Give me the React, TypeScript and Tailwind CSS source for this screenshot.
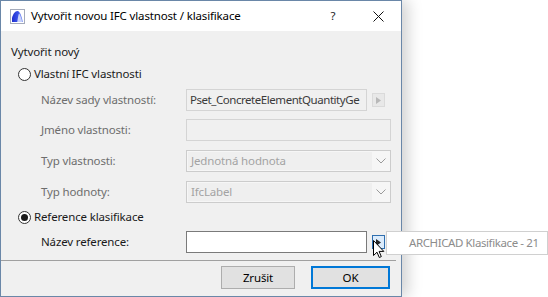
import React from 'react';

const font = { fontFamily: '"Noto Sans", "Liberation Sans", sans-serif' };

function AppIcon() {
  return (
    <svg width="15" height="15" viewBox="0 0 15 15">
      <defs>
        <linearGradient id="ac" x1="0" y1="0" x2="1" y2="0">
          <stop offset="0" stopColor="#1f2fd0" />
          <stop offset="0.6" stopColor="#3d57ea" />
          <stop offset="1" stopColor="#8ea3f7" />
        </linearGradient>
      </defs>
      <rect x="0.5" y="0.5" width="14" height="14" fill="#ffffff" stroke="#a4abbb" />
      <path d="M2 13 L2 9 C3 5 5 2 7.5 2 C10 2 11.5 7 13 13 Z" fill="url(#ac)" />
      <path d="M7.2 13 C8 8 8.5 5 9.2 4.2 C10.5 6.5 11.5 9.5 12.2 13 Z" fill="#c9d3fb" />
    </svg>
  );
}

function Radio({ checked }: { checked?: boolean }) {
  return (
    <span className="w-[13px] h-[13px] rounded-full border border-[#333333] bg-white flex items-center justify-center shrink-0">
      {checked && <span className="w-[7px] h-[7px] rounded-full bg-[#1a1a1a]" />}
    </span>
  );
}

function ArrowBtn({ active }: { active?: boolean }) {
  return (
    <span
      className={
        active
          ? 'w-[13px] h-[14px] border border-[#2f6fb0] bg-[#dcecfc] flex items-center justify-center'
          : 'w-[13px] h-[14px] border border-[#dadada] bg-[#e8e8e8] flex items-center justify-center'
      }
    >
      <svg width="5" height="7" viewBox="0 0 5 7">
        <path d="M0 0 L5 3.5 L0 7 Z" fill={active ? '#222222' : '#b8b8b8'} />
      </svg>
    </span>
  );
}

function Chevron() {
  return (
    <svg width="10" height="6" viewBox="0 0 10 6">
      <path d="M0.5 0.5 L5 5 L9.5 0.5" stroke="#9a9a9a" fill="none" strokeWidth="1" />
    </svg>
  );
}

function Row({ label, dark, children }: { label: string; dark?: boolean; children: React.ReactNode }) {
  return (
    <div className="flex items-center h-[22px]">
      <span
        className={
          dark
            ? 'w-[185px] shrink-0 pl-[40px] whitespace-nowrap text-[#1a1a1a]'
            : 'w-[185px] shrink-0 pl-[40px] whitespace-nowrap text-[#6d6d6d]'
        }
      >
        {label}
      </span>
      {children}
    </div>
  );
}

export default function App() {
  return (
    <div className="relative w-[548px] h-[297px] bg-white overflow-hidden text-[11.5px] leading-[16px] tracking-[-0.15px]" style={font}>
      <div className="w-[402px] h-[297px] border border-[#6a87a8] flex flex-col shadow-[6px_0_14px_rgba(0,0,0,0.18)]">
        <div className="h-[30px] bg-white flex items-center shrink-0">
          <span className="ml-[9px] mt-[1px] flex"><AppIcon /></span>
          <span className="ml-[6px] text-[#000000] whitespace-nowrap">Vytvořit novou IFC vlastnost / klasifikace</span>
          <span className="ml-auto w-[20px] text-center text-[#222]">?</span>
          <span className="ml-[30px] mr-[17px] w-[11px] flex justify-center">
            <svg width="11" height="11" viewBox="0 0 11 11">
              <path d="M0.5 0.5 L10.5 10.5 M10.5 0.5 L0.5 10.5" stroke="#111" strokeWidth="1" />
            </svg>
          </span>
        </div>
        <div className="flex-1 bg-[#f0f0f0] flex flex-col pt-[13px]">
          <div className="pl-[10px] text-[#1a1a1a]">Vytvořit nový</div>
          <div className="flex items-center gap-[3px] pl-[17px] mt-[6px] text-[#1a1a1a]">
            <Radio />
            <span>Vlastní IFC vlastnosti</span>
          </div>
          <div className="mt-[7px]">
            <Row label="Název sady vlastností:">
              <div className="w-[181px] h-[22px] border border-[#d4d4d4] bg-[#f0f0f0] flex items-center px-[3px] text-[#3a3a3a] tracking-[-0.45px] overflow-hidden whitespace-nowrap">
                Pset_ConcreteElementQuantityGe
              </div>
              <span className="ml-[5px] flex"><ArrowBtn /></span>
            </Row>
          </div>
          <div className="mt-[8px]">
            <Row label="Jméno vlastnosti:">
              <div className="w-[205px] h-[22px] border border-[#d4d4d4] bg-[#f0f0f0]" />
            </Row>
          </div>
          <div className="mt-[9px]">
            <Row label="Typ vlastnosti:">
              <div className="w-[205px] h-[22px] border border-[#cccccc] bg-[#f6f6f6] flex p-[1px]">
                <div className="flex-1 bg-[#efefef] flex items-center px-[3px] text-[#a3a3a3]">Jednotná hodnota</div>
                <div className="w-[17px] flex items-center justify-center"><Chevron /></div>
              </div>
            </Row>
          </div>
          <div className="mt-[9px]">
            <Row label="Typ hodnoty:">
              <div className="w-[205px] h-[22px] border border-[#cccccc] bg-[#f6f6f6] flex p-[1px]">
                <div className="flex-1 bg-[#efefef] flex items-center px-[3px] text-[#a3a3a3]">IfcLabel</div>
                <div className="w-[17px] flex items-center justify-center"><Chevron /></div>
              </div>
            </Row>
          </div>
          <div className="flex items-center gap-[3px] pl-[17px] mt-[6px] text-[#1a1a1a]">
            <Radio checked />
            <span>Reference klasifikace</span>
          </div>
          <div className="mt-[6px]">
            <Row label="Název reference:" dark>
              <div className="w-[181px] h-[22px] border border-[#7a7a7a] bg-white" />
              <span className="ml-[5px] flex"><ArrowBtn active /></span>
            </Row>
          </div>
          <div className="mt-[7px] mr-[5px] h-[1px] bg-[#a0a0a0]" />
          <div className="flex justify-end gap-[16px] pr-[11px] mt-[5px]">
            <button className="w-[74px] h-[23px] border border-[#adadad] bg-[#e1e1e1] text-[#000]">Zrušit</button>
            <button className="w-[79px] h-[23px] border-2 border-[#0078d7] bg-[#e1e1e1] text-[#000]">OK</button>
          </div>
        </div>
      </div>
      <div className="absolute left-[386px] top-[231px] w-[162px] h-[24px] border border-[#d0d0d0] bg-white flex items-center pl-[22px] whitespace-nowrap tracking-[-0.4px] text-[#8c8c8c]">
        ARCHICAD Klasifikace - 21
      </div>
      <svg className="absolute left-[373px] top-[240px]" width="13" height="20" viewBox="0 0 13 20">
        <path d="M0.5 0.5 L0.5 15.5 L4 12.2 L6.3 17.5 L8.3 16.6 L6.1 11.4 L10.8 11.4 Z" fill="#ffffff" stroke="#000000" strokeWidth="1" />
      </svg>
    </div>
  );
}
